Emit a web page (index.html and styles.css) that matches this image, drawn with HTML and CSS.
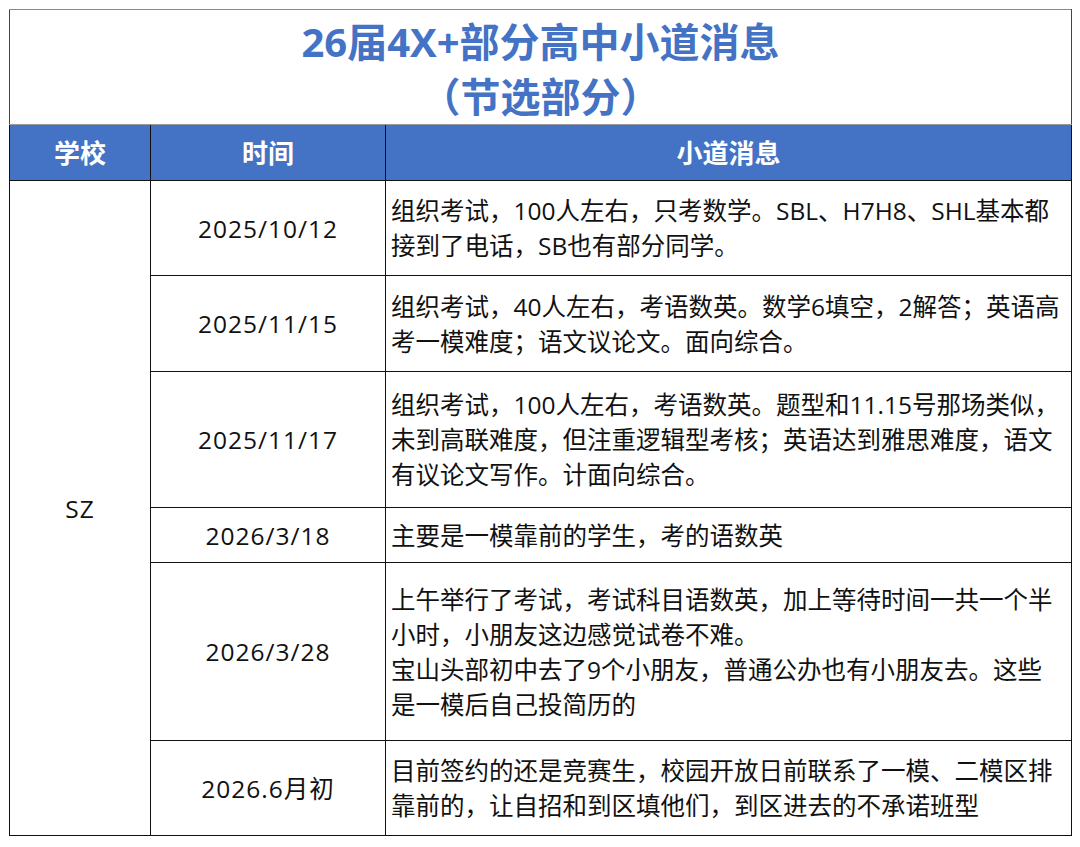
FILE: index.html
```html
<!DOCTYPE html>
<html lang="zh-CN">
<head>
<meta charset="utf-8">
<title>26届4X+部分高中小道消息</title>
<link rel="stylesheet" href="styles.css">
</head>
<body>
<div class="page">
<table class="report">
<colgroup><col class="c-school"><col class="c-date"><col class="c-news"></colgroup>
<thead>
<tr class="row-title"><th colspan="3" class="title">26届4X+部分高中小道消息<br>（节选部分）</th></tr>
<tr class="row-head"><th>学校</th><th>时间</th><th>小道消息</th></tr>
</thead>
<tbody>
<tr class="row-1"><td rowspan="6" class="school">SZ</td><td class="date">2025/10/12</td><td class="news">组织考试，100人左右，只考数学。SBL、H7H8、SHL基本都<br>接到了电话，SB也有部分同学。</td></tr>
<tr class="row-2"><td class="date">2025/11/15</td><td class="news">组织考试，40人左右，考语数英。数学6填空，2解答；英语高<br>考一模难度；语文议论文。面向综合。</td></tr>
<tr class="row-3"><td class="date">2025/11/17</td><td class="news">组织考试，100人左右，考语数英。题型和11.15号那场类似，<br>未到高联难度，但注重逻辑型考核；英语达到雅思难度，语文<br>有议论文写作。计面向综合。</td></tr>
<tr class="row-4"><td class="date">2026/3/18</td><td class="news">主要是一模靠前的学生，考的语数英</td></tr>
<tr class="row-5"><td class="date">2026/3/28</td><td class="news">上午举行了考试，考试科目语数英，加上等待时间一共一个半<br>小时，小朋友这边感觉试卷不难。<br>宝山头部初中去了9个小朋友，普通公办也有小朋友去。这些<br>是一模后自己投简历的</td></tr>
<tr class="row-6"><td class="date">2026.6月初</td><td class="news">目前签约的还是竞赛生，校园开放日前联系了一模、二模区排<br>靠前的，让自招和到区填他们，到区进去的不承诺班型</td></tr>
</tbody>
</table>
</div>
</body>
</html>
```

FILE: styles.css
```css
html, body {
  margin: 0;
  padding: 0;
  background: #ffffff;
}

body {
  font-family: "Open Sans", "Noto Sans CJK SC", sans-serif;
  color: #111111;
}

.page {
  padding: 9px 0 0 9px;
}

.report {
  border-collapse: collapse;
  table-layout: fixed;
  width: 1062px;
  border: 1.5px solid #444444;
}

.c-school { width: 141px; }
.c-date { width: 235px; }
.c-news { width: 686px; }

.report th,
.report td {
  border: 1px solid #111111;
  padding: 0;
  vertical-align: middle;
}

.row-title { height: 115px; }
.row-head { height: 56px; }
.row-1 { height: 95px; }
.row-2 { height: 96px; }
.row-3 { height: 136px; }
.row-4 { height: 55px; }
.row-5 { height: 178px; }
.row-6 { height: 95px; }

.report .title {
  border-top-color: #888888;
  border-left-color: #444444;
  border-right-color: #444444;
  border-bottom-color: #999999;
  color: #4472c4;
  font-size: 40px;
  font-weight: 700;
  line-height: 55px;
  text-align: center;
  padding-top: 4px;
}

.row-head th {
  background: #4472c4;
  color: #ffffff;
  font-size: 26px;
  font-weight: 700;
  text-align: center;
  line-height: 30px;
}

.school,
.date {
  text-align: center;
  font-size: 24.5px;
  line-height: 35px;
  letter-spacing: 1px;
}

.news {
  font-size: 24.5px;
  line-height: 35px;
  padding-left: 5px !important;
  text-align: left;
  white-space: nowrap;
  overflow: hidden;
}
```
